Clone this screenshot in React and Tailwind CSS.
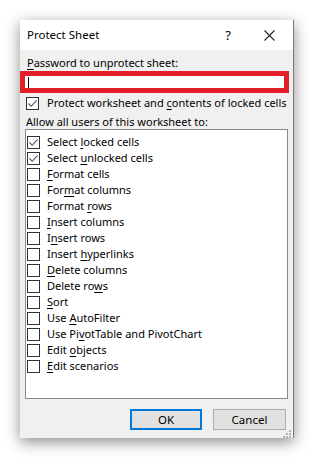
import React from "react";

const U = ({ children }) => <span className="underline underline-offset-2 decoration-1">{children}</span>;

function Box({ checked }) {
  return (
    <span className="w-[13px] h-[13px] border border-[#333333] bg-white flex items-center justify-center shrink-0">
      {checked && (
        <svg width="11" height="11" viewBox="0 0 11 11">
          <path d="M1.5 5.5 L4.2 8.3 L9.6 2.4" fill="none" stroke="#555555" strokeWidth="1.1" />
        </svg>
      )}
    </span>
  );
}

const items = [
  [true, <>Select <U>l</U>ocked cells</>],
  [true, <>Select <U>u</U>nlocked cells</>],
  [false, <><U>F</U>ormat cells</>],
  [false, <>For<U>m</U>at columns</>],
  [false, <>Format <U>r</U>ows</>],
  [false, <><U>I</U>nsert columns</>],
  [false, <>I<U>n</U>sert rows</>],
  [false, <>Insert <U>h</U>yperlinks</>],
  [false, <><U>D</U>elete columns</>],
  [false, <>Delete ro<U>w</U>s</>],
  [false, <><U>S</U>ort</>],
  [false, <>Use <U>A</U>utoFilter</>],
  [false, <>Use Pi<U>v</U>otTable and PivotChart</>],
  [false, <>Edit <U>o</U>bjects</>],
  [false, <><U>E</U>dit scenarios</>],
];

export default function App() {
  return (
    <div className="w-[314px] h-[458px] bg-white pt-[20px] pl-[20px] text-[11px] leading-[16px] text-black whitespace-nowrap" style={{ fontFamily: '"Noto Sans", "Open Sans", sans-serif' }}>
      <div className="w-[274px] h-[418px] bg-[#f0f0f0] border-r border-[#7a7a7a] shadow-[0_4px_14px_rgba(0,0,0,0.45)] flex flex-col">
        <div className="h-[30px] bg-white flex items-center pl-[7px] shrink-0">
          <span className="text-[11.5px] flex-1">Protect Sheet</span>
          <span className="w-[20px] text-[13px] mr-[26px] text-center">?</span>
          <svg width="11" height="11" viewBox="0 0 11 11" className="mr-[18px]">
            <path d="M0.5 0.5 L10.5 10.5 M10.5 0.5 L0.5 10.5" stroke="#222" strokeWidth="1.1" />
          </svg>
        </div>
        <div className="flex flex-col flex-1">
          <div className="pl-[7px] h-[21px] pt-[5px]"><U>P</U>assword to unprotect sheet:</div>
          <div className="w-[269px] h-[22px] border-[5px] border-[#e3202a] bg-white flex items-center pl-[3px] shrink-0">
            <span className="w-px h-[11px] bg-black"></span>
          </div>
          <div className="flex items-center h-[16px] mt-[2px] pl-[6px] gap-[8px]">
            <Box checked />
            <span>Protect worksheet and <U>c</U>ontents of locked cells</span>
          </div>
          <div className="pl-[6px] h-[14px] leading-[14px] mt-[4px]">Allow all users of this worksheet to:</div>
          <div className="ml-[5px] w-[263px] h-[270px] bg-white border border-[#8a8a8a] pt-[4px] pl-[1px] shrink-0">
            {items.map(([c, label], i) => (
              <div key={i} className="flex items-center h-[16px] gap-[7px]">
                <Box checked={c} />
                <span>{label}</span>
              </div>
            ))}
          </div>
          <div className="flex justify-end gap-[11px] mt-[10px] pr-[7px]">
            <button className="w-[72px] h-[21px] bg-[#e1e1e1] border-2 border-[#0078d7] text-[11.5px] leading-none">OK</button>
            <button className="w-[73px] h-[21px] bg-[#e1e1e1] border border-[#adadad] text-[11.5px] leading-none">Cancel</button>
          </div>
          <div className="flex justify-end pr-[2px] mt-auto pb-[3px]">
            <svg width="8" height="8" viewBox="0 0 8 8">
              <g fill="#b5b5b5">
                <rect x="6" y="0" width="2" height="2" />
                <rect x="3" y="3" width="2" height="2" />
                <rect x="6" y="3" width="2" height="2" />
                <rect x="0" y="6" width="2" height="2" />
                <rect x="3" y="6" width="2" height="2" />
                <rect x="6" y="6" width="2" height="2" />
              </g>
            </svg>
          </div>
        </div>
      </div>
    </div>
  );
}
